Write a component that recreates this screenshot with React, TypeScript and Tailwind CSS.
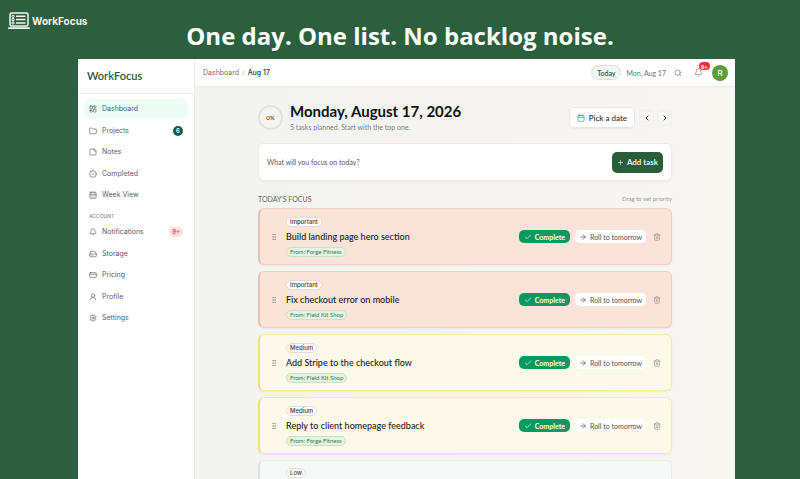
import type { ComponentType } from 'react';
import {
  ArrowRight,
  Bell,
  Calendar,
  CalendarDays,
  Check,
  ChevronLeft,
  ChevronRight,
  CircleCheck,
  CreditCard,
  Folder,
  GripVertical,
  HardDrive,
  LayoutDashboard,
  Plus,
  Search,
  Settings,
  StickyNote,
  Trash2,
  UserRound,
} from 'lucide-react';

type Icon = ComponentType<{ size?: number; strokeWidth?: number; className?: string }>;

type NavItem = {
  label: string;
  icon: Icon;
  active?: boolean;
  count?: string;
  alert?: string;
};

type Priority = 'Important' | 'Medium' | 'Low';

type Task = {
  title: string;
  priority: Priority;
  project: string;
};

const MAIN_NAV: NavItem[] = [
  { label: 'Dashboard', icon: LayoutDashboard, active: true },
  { label: 'Projects', icon: Folder, count: '6' },
  { label: 'Notes', icon: StickyNote },
  { label: 'Completed', icon: CircleCheck },
  { label: 'Week View', icon: CalendarDays },
];

const ACCOUNT_NAV: NavItem[] = [
  { label: 'Notifications', icon: Bell, alert: '9+' },
  { label: 'Storage', icon: HardDrive },
  { label: 'Pricing', icon: CreditCard },
  { label: 'Profile', icon: UserRound },
  { label: 'Settings', icon: Settings },
];

const TASKS: Task[] = [
  { title: 'Build landing page hero section', priority: 'Important', project: 'Forge Fitness' },
  { title: 'Fix checkout error on mobile', priority: 'Important', project: 'Field Kit Shop' },
  { title: 'Add Stripe to the checkout flow', priority: 'Medium', project: 'Field Kit Shop' },
  { title: 'Reply to client homepage feedback', priority: 'Medium', project: 'Forge Fitness' },
];

const CARD_STYLES: Record<Priority, string> = {
  Important: 'bg-[#fae4da] border-[#eecfc3] border-l-[#e9bfae]',
  Medium: 'bg-[#fdf9ea] border-[#f6e6b0] border-l-[#f8dc85]',
  Low: 'bg-[#f7f9f8] border-[#e8ecec] border-l-[#dde1ea]',
};

const Logo = () => (
  <svg width="22" height="18" viewBox="0 0 22 18" fill="none" stroke="#f1f6ee" aria-hidden="true">
    <rect x="2" y="1" width="18" height="13" rx="1.5" strokeWidth="1.5" />
    <path d="M0.9 16.2h20.2" strokeWidth="1.8" strokeLinecap="round" />
    <path d="M8 4.3h9.5M8 7.6h9.5M8 10.9h9.5" strokeWidth="1.5" />
    <path d="M4 3.3h2v2h-2zM4 6.6h2v2h-2zM4 9.9h2v2h-2z" strokeWidth="0.9" />
  </svg>
);

const NavList = ({ items }: { items: NavItem[] }) => (
  <ul className="flex h-[106px] flex-col justify-between">
    {items.map(({ label, icon: ItemIcon, active, count, alert }) => (
      <li key={label}>
        <a
          href="#"
          className={`flex h-5 items-center gap-[5px] rounded-md px-[5px] text-[7px] text-[#5b615e] ${
            active ? 'bg-[#ebfdf4]' : ''
          }`}
        >
          <ItemIcon size={8} strokeWidth={2} className="text-[#626866]" />
          <span className="flex-1">{label}</span>
          {count && (
            <span className="grid size-[10px] place-items-center rounded-full bg-[#1d5a38] text-[6px] font-semibold text-white">
              {count}
            </span>
          )}
          {alert && (
            <span className="grid h-[10px] place-items-center rounded-full bg-[#fddfe0] px-[3px] text-[6px] font-semibold text-[#e0485a]">
              {alert}
            </span>
          )}
        </a>
      </li>
    ))}
  </ul>
);

const Sidebar = () => (
  <aside className="w-[117px] shrink-0 border-r border-[#ebecea] bg-white">
    <div className="flex h-[35px] items-center border-b border-[#ecedeb] px-[9px] font-['Lato',sans-serif] text-[11px] font-semibold text-[#2a5a45]">
      WorkFocus
    </div>
    <nav className="px-[6px] pt-[5px]">
      <NavList items={MAIN_NAV} />
      <h2 className="flex h-[17px] items-center px-[5px] pt-[5px] text-[5px] font-medium text-[#8a908d]">
        ACCOUNT
      </h2>
      <NavList items={ACCOUNT_NAV} />
    </nav>
  </aside>
);

const TopBar = () => (
  <header className="flex h-7 shrink-0 items-center justify-between border-b border-[#ebebe8] bg-white pr-[7px] pl-2 text-[7px] text-[#6d7370]">
    <nav className="flex gap-[3px]" aria-label="Breadcrumb">
      <a href="#">Dashboard</a>
      <span className="text-[#b5b8b6]">/</span>
      <span className="font-medium text-[#2e3331]">Aug 17</span>
    </nav>
    <div className="flex items-center">
      <button className="h-[15px] rounded-full border border-[#dbe3df] bg-[#f1f6f4] px-[5px] font-['Lato',sans-serif] text-[7px] font-semibold text-[#2f5c48]">
        Today
      </button>
      <span className="ml-[5px] font-['Lato',sans-serif]">Mon, Aug 17</span>
      <button className="ml-2" aria-label="Search">
        <Search size={8} strokeWidth={2} />
      </button>
      <button className="relative ml-3" aria-label="Notifications">
        <Bell size={9} strokeWidth={2} className="text-[#8c918f]" />
        <span className="absolute -top-[6px] left-[5px] grid h-2 place-items-center rounded-full bg-[#f5303c] px-[2px] text-[5px] font-bold text-white">
          9+
        </span>
      </button>
      <span className="ml-[9px] grid size-4 place-items-center rounded-full bg-[#5f9e33] text-[8px] font-medium text-white">
        R
      </span>
    </div>
  </header>
);

const DayHeader = () => (
  <div className="flex items-center">
    <div className="grid size-[25px] place-items-center rounded-full border-2 border-[#e2e3da] text-[6px] font-semibold text-[#4b514e]">
      0%
    </div>
    <div className="ml-[7px] flex-1">
      <h1 className="text-[15px] leading-[19px] font-bold text-[#0d0f0e]">
        Monday, August 17, 2026
      </h1>
      <p className="text-[7px] leading-3 text-[#7d827f]">5 tasks planned. Start with the top one.</p>
    </div>
    <button className="flex h-[21px] items-center gap-1 rounded-[5px] border border-[#e7e8e4] bg-white px-[7px] text-[8px] font-medium text-[#2b2f2d] shadow-xs">
      <Calendar size={8} className="text-[#2a9d6c]" />
      Pick a date
    </button>
    <button
      className="ml-1 grid h-4 w-[15px] place-items-center rounded-[4px] border border-[#eeede9] text-[#2b2f2d]"
      aria-label="Previous day"
    >
      <ChevronLeft size={8} strokeWidth={3} />
    </button>
    <button
      className="ml-[3px] grid h-4 w-[15px] place-items-center rounded-[4px] border border-[#eeede9] text-[#2b2f2d]"
      aria-label="Next day"
    >
      <ChevronRight size={8} strokeWidth={3} />
    </button>
  </div>
);

const AddTask = () => (
  <form className="mt-[10px] flex h-[38px] items-center rounded-md border border-[#ebebe7] bg-white px-2 shadow-xs">
    <input
      type="text"
      aria-label="New task"
      placeholder="What will you focus on today?"
      className="min-w-0 flex-1 text-[7px] outline-none placeholder:text-[#555b58]"
    />
    <button
      type="button"
      className="flex h-[21px] items-center gap-[3px] rounded-[5px] bg-[#2a5d3a] px-[5px] text-[8px] font-semibold text-white"
    >
      <Plus size={7} strokeWidth={2} />
      Add task
    </button>
  </form>
);

const PriorityChip = ({ priority }: { priority: Priority }) => (
  <span className="flex h-[10px] items-center rounded-full border border-[#dedfdc] bg-[#fefdfc] px-[3px] font-['Inter',sans-serif] text-[6px] font-medium text-[#3d4240]">
    {priority}
  </span>
);

const TaskCard = ({ title, priority, project }: Task) => (
  <li
    className={`flex h-[57px] items-center rounded-md border border-l-2 px-[10px] shadow-xs ${CARD_STYLES[priority]}`}
  >
    <GripVertical size={8} strokeWidth={2} className="text-[#8f8d88]" />
    <div className="ml-2 flex flex-1 flex-col items-start">
      <PriorityChip priority={priority} />
      <h3 className="my-1 text-[9px] leading-3 font-medium text-[#24211d]">{title}</h3>
      <span className="flex h-[10px] items-center rounded-full border border-[#c5e3c8] bg-[#e4f3e2] px-[3px] text-[6px] text-[#3f7a52]">
        From: {project}
      </span>
    </div>
    <button className="flex h-[13px] items-center gap-[3px] rounded-[5px] bg-[#079a60] px-[5px] text-[7px] font-bold text-white">
      <Check size={8} strokeWidth={2} />
      Complete
    </button>
    <button className="ml-[5px] flex h-[13px] items-center gap-[3px] rounded-[5px] bg-white px-1 text-[7px] text-[#4b504e]">
      <ArrowRight size={8} strokeWidth={2} />
      Roll to tomorrow
    </button>
    <button className="ml-[7px]" aria-label={`Delete ${title}`}>
      <Trash2 size={8} strokeWidth={2} className="text-[#98948d]" />
    </button>
  </li>
);

export default function App() {
  return (
    <div className="flex h-screen flex-col overflow-hidden bg-[#2c5f3d] font-['Inter',sans-serif] leading-[10px]">
      <div className="relative h-[59px] shrink-0">
        <div className="absolute top-3 left-2 flex items-center gap-[2px] text-[10px] font-bold text-[#f1f6ee]">
          <Logo />
          WorkFocus
        </div>
        <p className="pt-5 text-center font-['Open_Sans',sans-serif] text-[24px] leading-8 font-bold text-white">
          One day. One list. No backlog noise.
        </p>
      </div>
      <div className="mr-[65px] ml-[78px] flex min-h-0 flex-1">
        <Sidebar />
        <div className="flex min-w-0 flex-1 flex-col bg-linear-to-r from-[#f3f3f1] to-[#f8f6f1]">
          <TopBar />
          <main className="mx-auto w-full max-w-[414px] pt-[15px] font-['Lato',sans-serif]">
            <DayHeader />
            <AddTask />
            <div className="flex h-[27px] items-end justify-between pb-[3px]">
              <h2 className="text-[7px] leading-3 text-[#636966]">TODAY'S FOCUS</h2>
              <span className="text-[6px] leading-3 text-[#989c99]">Drag to set priority</span>
            </div>
            <ul className="flex flex-col gap-[6px]">
              {TASKS.map((task) => (
                <TaskCard key={task.title} {...task} />
              ))}
              <li
                className={`flex h-[57px] items-start rounded-md border border-l-2 pt-[7px] pl-[26px] ${CARD_STYLES.Low}`}
              >
                <PriorityChip priority="Low" />
              </li>
            </ul>
          </main>
        </div>
      </div>
    </div>
  );
}
